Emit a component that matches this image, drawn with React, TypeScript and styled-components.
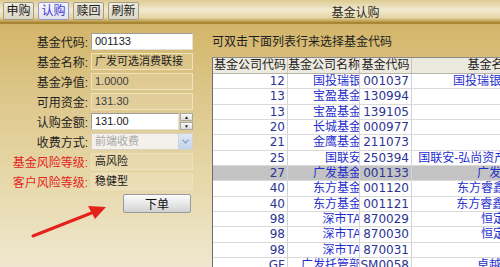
import React from 'react';
import styled, { createGlobalStyle } from 'styled-components';

const GlobalStyle = createGlobalStyle`
html, body {
    margin: 0;
    padding: 0;
    width: 500px;
    height: 267px;
    overflow: hidden;
}
body {
    font-family: "Liberation Sans", "Noto Sans CJK SC", sans-serif;
    font-size: 12px;
    color: #222;
}
`;

interface FundRow {
    companyCode: string;
    companyName: string;
    fundCode: string;
    fundName: string;
}

const rows: FundRow[] = [
    { companyCode: '12', companyName: '国投瑞银', fundCode: '001037', fundName: '国投瑞银新机遇灵活配' },
    { companyCode: '13', companyName: '宝盈基金', fundCode: '130994', fundName: '宝盈祥泰A' },
    { companyCode: '13', companyName: '宝盈基金', fundCode: '139105', fundName: '宝盈祥瑞' },
    { companyCode: '20', companyName: '长城基金', fundCode: '000977', fundName: '长城环保' },
    { companyCode: '21', companyName: '金鹰基金', fundCode: '211073', fundName: '金鹰丰泽' },
    { companyCode: '25', companyName: '国联安', fundCode: '250394', fundName: '国联安-弘尚资产稳健增利1号' },
    { companyCode: '27', companyName: '广发基金', fundCode: '001133', fundName: '广发可选消费联接' },
    { companyCode: '40', companyName: '东方基金', fundCode: '001120', fundName: '东方睿鑫热点挖掘A类' },
    { companyCode: '40', companyName: '东方基金', fundCode: '001121', fundName: '东方睿鑫热点挖掘C类' },
    { companyCode: '98', companyName: '深市TA', fundCode: '870029', fundName: '恒定增利宝一号A' },
    { companyCode: '98', companyName: '深市TA', fundCode: '870030', fundName: '恒定增利宝二号A' },
    { companyCode: '98', companyName: '深市TA', fundCode: '870031', fundName: '恒定增利' },
    { companyCode: 'GF', companyName: '广发托管部', fundCode: 'SM0058', fundName: '卓越稳健成长一期' },
];

const selectedCode = '001133';

const Window = styled.div`
width: 500px;
height: 267px;
display: flex;
flex-direction: column;
overflow: hidden;
background: linear-gradient(180deg, #c7a24f 0px, #d4b76c 30px, #dcc588 90px, #e6d6a6 170px, #efe7cf 267px);
position: relative;
`;

const TopBar = styled.div`
height: 22px;
flex: none;
display: grid;
grid-template-columns: 207px 1fr;
align-items: center;
background: linear-gradient(180deg, #ddcb92 0%, #f2ead0 45%, #e6d7a6 80%, #b89443 100%);
border-bottom: 2px solid #a88636;
`;

const Tabs = styled.div`
display: flex;
gap: 4px;
padding-left: 3px;
`;

const Tab = styled.button<{ $active?: boolean }>`
height: 18px;
width: 31px;
padding: 0;
font-family: "Liberation Sans", "Noto Sans CJK SC", sans-serif;
font-size: 12px;
line-height: 16px;
color: ${p => (p.$active ? '#3a3ad6' : '#1c1c1c')};
background: ${p => (p.$active ? 'linear-gradient(#f6f6fb, #e4e4f0)' : 'linear-gradient(#f0ece0, #dcd6c4)')};
border: 1px solid ${p => (p.$active ? '#9a9ac8' : '#a49c84')};
border-radius: 2px;
`;

const Title = styled.div`
text-align: center;
font-size: 12px;
color: #2a2a2a;
padding-left: 4px;
`;

const Body = styled.div`
flex: 1;
display: grid;
grid-template-columns: 207px 1fr;
min-height: 0;
`;

const Form = styled.div`
padding-top: 9px;
display: flex;
flex-direction: column;
gap: 3px;
`;

const Row = styled.div`
display: grid;
grid-template-columns: 88px 102px;
column-gap: 3px;
align-items: center;
height: 17px;
`;

const Label = styled.div<{ $warn?: boolean }>`
text-align: right;
white-space: nowrap;
font-size: 12px;
color: ${p => (p.$warn ? '#e3231c' : '#1e1e1e')};
`;

const Field = styled.div<{ $muted?: boolean }>`
height: 17px;
box-sizing: border-box;
border: 1px solid #efe3bd;
background: rgba(255, 255, 255, 0.12);
padding-left: 3px;
font-size: 11px;
line-height: 15px;
color: ${p => (p.$muted ? '#3e3e3e' : '#1a1a1a')};
white-space: nowrap;
overflow: hidden;
`;

const TextInput = styled.div`
height: 17px;
box-sizing: border-box;
border: 1px solid #9c9c9c;
border-right-color: #e0e0e0;
border-bottom-color: #e0e0e0;
background: #fff;
padding-left: 3px;
font-size: 11px;
line-height: 15px;
color: #1a1a1a;
flex: 1;
`;

const InputGroup = styled.div`
display: flex;
height: 17px;
gap: 1px;
`;

const Spinner = styled.div`
width: 13px;
display: flex;
flex-direction: column;
gap: 1px;
`;

const SpinButton = styled.div`
flex: 1;
background: linear-gradient(#fafafa, #dcdcdc);
border: 1px solid #a8a8a8;
display: flex;
align-items: center;
justify-content: center;
font-size: 5px;
color: #222;
line-height: 1;
`;

const Select = styled.div`
height: 17px;
box-sizing: border-box;
display: flex;
border: 1px solid #d6d2c4;
background: #f3f1ea;
`;

const SelectText = styled.div`
flex: 1;
padding-left: 3px;
font-size: 11px;
line-height: 15px;
color: #a8a8a8;
`;

const SelectArrow = styled.div`
width: 13px;
background: linear-gradient(#dfe8f6, #c4d3ea);
border-left: 1px solid #c8d2e2;
display: flex;
align-items: center;
justify-content: center;
`;

const ButtonRow = styled.div`
display: grid;
grid-template-columns: 88px 102px;
column-gap: 3px;
margin-top: 1px;
`;

const OrderButton = styled.button`
grid-column: 2;
justify-self: end;
margin-right: 2px;
width: 68px;
height: 19px;
padding: 0;
font-family: "Liberation Sans", "Noto Sans CJK SC", sans-serif;
font-size: 12px;
color: #111;
background: linear-gradient(#fbfbfb, #e6e6e6 55%, #d2d2d2);
border: 1px solid #9a9a9a;
border-radius: 2px;
`;

const Right = styled.div`
padding: 11px 0 0 5px;
display: flex;
flex-direction: column;
min-width: 0;
`;

const Hint = styled.div`
font-size: 12px;
line-height: 14px;
color: #1e1e1e;
margin-bottom: 8px;
white-space: nowrap;
`;

const Table = styled.div`
flex: 1;
background: #fff;
border-left: 1px solid #6e6e6e;
border-top: 1px solid #8a8a8a;
overflow: hidden;
font-family: "DejaVu Sans", "Noto Sans CJK SC", sans-serif;
font-size: 12px;
`;

const columns = '75px 72px 52px 160px';

const HeaderRow = styled.div`
display: grid;
grid-template-columns: ${columns};
height: 15px;
background: #ece9df;
border-bottom: 1px solid #b8b4a8;
width: max-content;
`;

const HeaderCell = styled.div`
text-align: center;
line-height: 15px;
white-space: nowrap;
overflow: hidden;
font-family: "Liberation Sans", "Noto Sans CJK SC", sans-serif;
color: #1e1e1e;
border-right: 1px solid #c9c5b8;
`;

const DataRow = styled.div<{ $selected?: boolean }>`
display: grid;
grid-template-columns: ${columns};
height: 15.33px;
box-sizing: border-box;
background: ${p => (p.$selected ? '#c3c3c3' : '#fff')};
border-bottom: 1px solid #dadada;
width: max-content;
`;

const Cell = styled.div<{ $tone: 'code' | 'name' }>`
display: flex;
justify-content: flex-end;
align-items: center;
padding-right: 2px;
overflow: hidden;
white-space: nowrap;
border-right: 1px solid #d2d2dc;
color: ${p => (p.$tone === 'code' ? '#2c3494' : '#1f2fcc')};
line-height: 14px;
`;

const Name = styled.span`
margin-right: -4px;
font-family: "Liberation Sans", "Noto Sans CJK SC", sans-serif;
`;

const Arrow = styled.svg`
position: absolute;
left: 0;
top: 0;
pointer-events: none;
`;

const FormRow = ({ label, warn, children }: { label: string; warn?: boolean; children: React.ReactNode }) => (
    <Row>
        <Label $warn={warn}>{label}</Label>
        {children}
    </Row>
);

export default function App() {
    return (
        <>
            <GlobalStyle />
            <Window>
                <TopBar>
                    <Tabs>
                        <Tab>申购</Tab>
                        <Tab $active>认购</Tab>
                        <Tab>赎回</Tab>
                        <Tab>刷新</Tab>
                    </Tabs>
                    <Title>基金认购</Title>
                </TopBar>
                <Body>
                    <Form>
                        <FormRow label="基金代码:">
                            <TextInput>001133</TextInput>
                        </FormRow>
                        <FormRow label="基金名称:">
                            <Field>广发可选消费联接</Field>
                        </FormRow>
                        <FormRow label="基金净值:">
                            <Field $muted>1.0000</Field>
                        </FormRow>
                        <FormRow label="可用资金:">
                            <Field $muted>131.30</Field>
                        </FormRow>
                        <FormRow label="认购金额:">
                            <InputGroup>
                                <TextInput>131.00</TextInput>
                                <Spinner>
                                    <SpinButton>▲</SpinButton>
                                    <SpinButton>▼</SpinButton>
                                </Spinner>
                            </InputGroup>
                        </FormRow>
                        <FormRow label="收费方式:">
                            <Select>
                                <SelectText>前端收费</SelectText>
                                <SelectArrow>
                                    <svg width="7" height="5" viewBox="0 0 7 5">
                                        <path d="M0.5 0.8 L3.5 4 L6.5 0.8" fill="none" stroke="#8fa6c8" strokeWidth="1.4" />
                                    </svg>
                                </SelectArrow>
                            </Select>
                        </FormRow>
                        <FormRow label="基金风险等级:" warn>
                            <Field>高风险</Field>
                        </FormRow>
                        <FormRow label="客户风险等级:" warn>
                            <Field>稳健型</Field>
                        </FormRow>
                        <ButtonRow>
                            <OrderButton>下单</OrderButton>
                        </ButtonRow>
                    </Form>
                    <Right>
                        <Hint>可双击下面列表行来选择基金代码</Hint>
                        <Table>
                            <HeaderRow>
                                <HeaderCell>基金公司代码</HeaderCell>
                                <HeaderCell>基金公司名称</HeaderCell>
                                <HeaderCell>基金代码</HeaderCell>
                                <HeaderCell>基金名称</HeaderCell>
                            </HeaderRow>
                            {rows.map((r, i) => (
                                <DataRow key={i} $selected={r.fundCode === selectedCode}>
                                    <Cell $tone="code">{r.companyCode}</Cell>
                                    <Cell $tone="name"><Name>{r.companyName}</Name></Cell>
                                    <Cell $tone="code">{r.fundCode}</Cell>
                                    <Cell $tone="name"><Name>{r.fundName}</Name></Cell>
                                </DataRow>
                            ))}
                        </Table>
                    </Right>
                </Body>
                <Arrow width="500" height="267" viewBox="0 0 500 267">
                    <line x1="33" y1="236" x2="94" y2="212" stroke="#e4221b" strokeWidth="3" strokeLinecap="round" />
                    <polygon points="106,207 88,206 95,219" fill="#e4221b" />
                </Arrow>
            </Window>
        </>
    );
}
